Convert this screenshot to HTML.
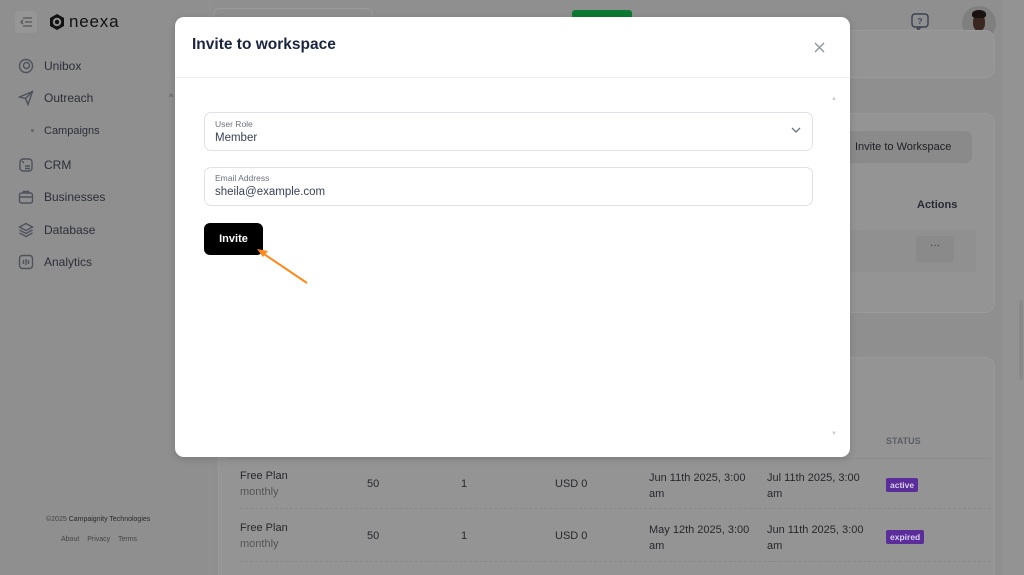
<!DOCTYPE html>
<html style="background:#8f8f8f;width:1024px;height:575px;overflow:hidden"><head><meta charset="utf-8">
<style>
*{box-sizing:border-box;margin:0;padding:0}
body{width:1024px;height:575px;overflow:hidden;background:#8f8f8f;font-family:"Liberation Sans",sans-serif;position:relative;color:#1f2230}
.abs{position:absolute}
.nav{left:18px;font-size:12px;color:#2c2f3a;display:flex;align-items:center}
.nav svg{width:16px;height:16px;margin-right:10px;fill:none;stroke:#4d525c;stroke-width:1.4}
.card{background:#949494;border-radius:10px;border:1px solid #9a9a9a}
.t{font-size:11px;color:#26282e}
.g{color:#555}
.badge{background:#5a2d9a;color:#d8d0ee;font-size:8.5px;font-weight:bold;border-radius:2px;padding:2px 4px}
</style></head><body>
<div class="abs" style="left:15px;top:11px;width:22px;height:22px;background:#969696;border-radius:4px"></div>
<svg class="abs" style="left:19px;top:15px" width="14" height="14" viewBox="0 0 14 14" fill="none" stroke="#555" stroke-width="1.3"><path d="M4 3h9M6 7h7M4 11h9M4 5L2 7l2 2"/></svg>
<svg class="abs" style="left:48px;top:13px" width="18" height="18" viewBox="0 0 18 18"><path d="M9 1l7 4v8l-7 4-7-4V5z" fill="#111"/><circle cx="9" cy="9" r="3.2" fill="none" stroke="#8f8f8f" stroke-width="2"/></svg>
<div class="abs" style="left:69px;top:12px;font-size:17px;color:#111;letter-spacing:0.8px">neexa</div>
<div class="abs" style="left:213px;top:8px;width:160px;height:22px;border:1px solid #9b9b9b;border-radius:7px"></div>
<div class="abs" style="left:572px;top:10px;width:60px;height:10px;background:#0c7a32;border-radius:3px"></div>
<svg class="abs" style="left:910px;top:12px" width="20" height="20" viewBox="0 0 20 20" fill="none" stroke="#3a4050" stroke-width="1.4"><rect x="2" y="2" width="16" height="13" rx="3"/><path d="M7 15l1 3 3-3"/><text x="10" y="12" font-size="8" text-anchor="middle" fill="#3a4050" stroke="none" font-family="Liberation Sans" font-weight="bold">?</text></svg>
<div class="abs" style="left:962px;top:6px;width:34px;height:34px;border-radius:50%;background:#7f7f7f;overflow:hidden"><div style="position:absolute;left:4px;top:24px;width:26px;height:16px;border-radius:50%;background:#6f868d"></div><div style="position:absolute;left:11px;top:8px;width:12px;height:17px;border-radius:45%;background:#3a2820"></div><div style="position:absolute;left:10px;top:4px;width:14px;height:8px;border-radius:50% 50% 30% 30%;background:#1a1210"></div></div>
<div class="abs nav" style="top:58px"><svg viewBox="0 0 16 16"><circle cx="8" cy="8" r="6.5"/><circle cx="8.5" cy="7.5" r="3"/></svg>Unibox</div>
<div class="abs nav" style="top:90px"><svg viewBox="0 0 16 16"><path d="M1.5 7L14.5 1.5 10 14.5 7.5 8.5z M7.5 8.5L14.5 1.5"/></svg>Outreach</div>
<div class="abs" style="left:169px;top:92px;font-size:9px;color:#555">^</div>
<div class="abs" style="left:31px;top:129px;width:3px;height:3px;border-radius:50%;background:#666"></div>
<div class="abs" style="left:44px;top:125px;font-size:11px;color:#2c2f3a">Campaigns</div>
<div class="abs nav" style="top:157px"><svg viewBox="0 0 16 16"><rect x="2" y="2" width="12" height="12" rx="3"/><path d="M7 9h5M7 11.5h5M4 4l2 2"/></svg>CRM</div>
<div class="abs nav" style="top:189px"><svg viewBox="0 0 16 16"><rect x="1.5" y="4" width="13" height="10" rx="2"/><path d="M5.5 4V2.5h5V4M1.5 8h13"/></svg>Businesses</div>
<div class="abs nav" style="top:222px"><svg viewBox="0 0 16 16"><path d="M8 1.5l6.5 3.5L8 8.5 1.5 5zM1.5 8L8 11.5 14.5 8M1.5 11L8 14.5 14.5 11"/></svg>Database</div>
<div class="abs nav" style="top:254px"><svg viewBox="0 0 16 16"><rect x="1.5" y="1.5" width="13" height="13" rx="3"/><path d="M5.5 6v4M8 5v6M10.5 6v4"/></svg>Analytics</div>
<div class="abs" style="left:46px;top:516px;font-size:7px;color:#444">©2025 <span style="color:#2a2a2a">Campaignity Technologies</span></div>
<div class="abs" style="left:61px;top:536px;font-size:7px;color:#444;word-spacing:6px">About Privacy Terms</div>
<div class="abs" style="left:209px;top:0;width:1px;height:575px;background:#939393"></div>
<div class="abs card" style="left:218px;top:30px;width:777px;height:48px"></div>
<div class="abs card" style="left:218px;top:113px;width:777px;height:200px"></div>
<div class="abs" style="left:838px;top:131px;width:134px;height:32px;background:#8a8a8a;border-radius:7px;font-size:11px;color:#1d1f24;padding:10px 0 0 17px">Invite to Workspace</div>
<div class="abs" style="left:917px;top:199px;font-size:11px;font-weight:bold;color:#262a36">Actions</div>
<div class="abs" style="left:850px;top:230px;width:126px;height:42px;background:#909090"></div>
<div class="abs" style="left:916px;top:236px;width:38px;height:26px;background:#8a8a8a;border-radius:4px;text-align:center;font-size:10px;color:#333;line-height:20px">···</div>
<div class="abs card" style="left:218px;top:357px;width:777px;height:218px;border-bottom:none;border-radius:10px 10px 0 0"></div>
<div class="abs" style="left:886px;top:436px;font-size:9px;font-weight:bold;color:#5a5e6a">STATUS</div>
<div class="abs" style="left:228px;top:458px;width:763px;height:1px;background:#8c8c8c"></div>
<div class="abs" style="left:1003px;top:0;width:21px;height:575px;background:#939393"></div>
<div class="abs" style="left:1019px;top:300px;width:4px;height:80px;background:#8a8a8a;border-radius:2px"></div>
<div class="abs t" style="left:240px;top:470px">Free Plan</div><div class="abs t g" style="left:240px;top:486px">monthly</div>
<div class="abs t" style="left:367px;top:478px">50</div><div class="abs t" style="left:461px;top:478px">1</div><div class="abs t" style="left:555px;top:478px">USD 0</div>
<div class="abs t" style="left:649px;top:470px;line-height:16px">Jun 11th 2025, 3:00<br>am</div>
<div class="abs t" style="left:767px;top:470px;line-height:16px">Jul 11th 2025, 3:00<br>am</div>
<div class="abs badge" style="left:886px;top:478px">active</div>
<div class="abs" style="left:240px;top:508px;width:751px;border-top:1px dashed #888"></div>
<div class="abs t" style="left:240px;top:522px">Free Plan</div><div class="abs t g" style="left:240px;top:538px">monthly</div>
<div class="abs t" style="left:367px;top:530px">50</div><div class="abs t" style="left:461px;top:530px">1</div><div class="abs t" style="left:555px;top:530px">USD 0</div>
<div class="abs t" style="left:649px;top:522px;line-height:16px">May 12th 2025, 3:00<br>am</div>
<div class="abs t" style="left:767px;top:522px;line-height:16px">Jun 11th 2025, 3:00<br>am</div>
<div class="abs badge" style="left:886px;top:530px">expired</div>
<div class="abs" style="left:240px;top:561px;width:751px;border-top:1px dashed #888"></div>
<div class="abs" style="left:175px;top:17px;width:675px;height:440px;background:#fff;border-radius:9px;box-shadow:0 2px 8px rgba(0,0,0,.15)">
 <div class="abs" style="left:17px;top:19px;font-size:15.5px;font-weight:bold;color:#1c2540">Invite to workspace</div>
 <svg class="abs" style="left:639px;top:25px" width="11" height="11" viewBox="0 0 11 11" stroke="#8a92a6" stroke-width="1.3"><path d="M1 1l9 9M10 1l-9 9"/></svg>
 <div class="abs" style="left:0;top:60px;width:675px;height:1px;background:#eceef2"></div>
 <div class="abs" style="left:656px;top:79px;font-size:6px;color:#ccc">▲</div>
 <div class="abs" style="left:656px;top:414px;font-size:6px;color:#ccc">▼</div>
 <div class="abs" style="left:29px;top:95px;width:609px;height:39px;border:1px solid #dfe2ea;border-radius:7px">
  <div class="abs" style="left:10px;top:6px;font-size:8.5px;color:#6b7080">User Role</div>
  <div class="abs" style="left:10px;top:19px;font-size:11.5px;color:#3a4258">Member</div>
  <svg class="abs" style="left:586px;top:14px" width="10" height="7" viewBox="0 0 10 7" fill="none" stroke="#6b7388" stroke-width="1.3"><path d="M1 1l4 4 4-4"/></svg>
 </div>
 <div class="abs" style="left:29px;top:150px;width:609px;height:39px;border:1px solid #dfe2ea;border-radius:7px">
  <div class="abs" style="left:10px;top:5px;font-size:8.5px;color:#6b7080">Email Address</div>
  <div class="abs" style="left:10px;top:18px;font-size:11.5px;color:#3a4258">sheila@example.com</div>
 </div>
 <div class="abs" style="left:29px;top:206px;width:59px;height:32px;background:#000;border-radius:6px;color:#fff;font-size:11px;font-weight:bold;text-align:center;line-height:32px">Invite</div>
 <svg class="abs" style="left:76px;top:225px" width="60" height="45" viewBox="0 0 60 45"><path d="M56 41L10 10" stroke="#ff8a1a" stroke-width="2"/><path d="M6 7l11 2-5 6z" fill="#ff8a1a"/></svg>
</div>
</body></html>
